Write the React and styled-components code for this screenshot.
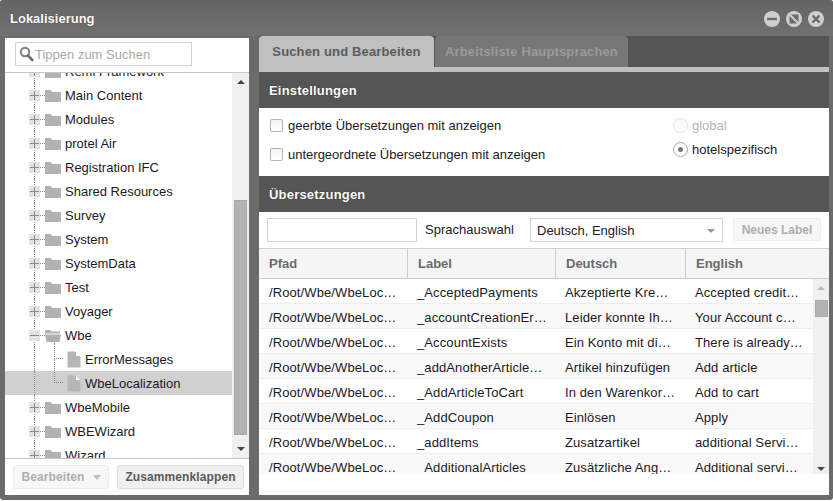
import React from "react";
import styled, { createGlobalStyle } from "styled-components";

const Global = createGlobalStyle`
  html, body { margin: 0; padding: 0; background: #fff; }
  * { box-sizing: border-box; }
  body { font-family: "Liberation Sans", Arial, sans-serif; font-size: 13px; color: #1a1a26; }
`;

const Win = styled.div`
  width: 833px; height: 500px; background: #6b6b6b; display: flex; flex-direction: column;
  border-radius: 3px; overflow: hidden;
`;
const TitleBar = styled.div`
  height: 36px; flex: none; display: flex; align-items: center; padding: 0 9px 0 10px;
  background: linear-gradient(#646464, #717171);
`;
const Title = styled.div`flex: 1; font-weight: bold; font-size: 13px; color: #fff; text-shadow: 0 0 1px #333;`;
const WinBtns = styled.div`display: flex; gap: 6px; margin-top: 1px;`;
const Body = styled.div`flex: 1; display: flex; padding: 0 4px 5px 5px; gap: 10px; min-height: 0;`;

const Left = styled.div`
  width: 244px; margin-top: 2px; background: #fff; display: flex; flex-direction: column;
`;
const SearchRow = styled.div`
  height: 35px; flex: none; padding: 4px 10px; border-bottom: 1px solid #c6c6c6;
`;
const SearchBox = styled.div`
  width: 177px; height: 24px; border: 1px solid #d2d2d2; display: flex; align-items: center; gap: 1px; padding-left: 3px;
  color: #aaa; font-size: 13px;
`;
const TreeWrap = styled.div`flex: 1; display: flex; min-height: 0; overflow: hidden;`;
const Tree = styled.div`flex: 1; overflow: hidden;`;
const TreeInner = styled.div`margin-top: -14px;`;
const Row = styled.div`
  position: relative; height: 24px; display: flex; align-items: center;
  padding-left: ${p => (p.$leaf ? 62 : 24)}px;
  background: ${p => (p.$sel ? "#d0d0d0" : "transparent")};
  white-space: nowrap;
  &::before {
    content: ""; position: absolute; left: 29px; top: 0; bottom: 0;
    border-left: 1px dotted #8a8a8a;
  }
`;
const LeafLine = styled.div`
  position: absolute; left: 49px; top: ${p => (p.$first ? -4 : -12)}px; width: 9px;
  height: ${p => (p.$first ? 16 : 24)}px;
  border-left: 1px dotted #8a8a8a; border-bottom: 1px dotted #8a8a8a;
`;
const Expander = styled.span`
  width: 11px; height: 11px; flex: none; background: #e1e4e7; position: relative; z-index: 1;
  &::before { content: ""; position: absolute; left: 1px; right: 1px; top: 5px; height: 1px; background: #8a8a8a; }
  &::after {
    content: ""; position: absolute; top: 1px; bottom: 1px; left: 5px; width: 1px;
    background: ${p => (p.$open ? "transparent" : "#8a8a8a")};
  }
`;
const Connector = styled.span`width: 5px; flex: none; margin-top: 1px; border-bottom: 1px dotted #8a8a8a;`;
const Label = styled.span`margin-left: 4px;`;
const TreeScroll = styled.div`
  width: 17px; flex: none; background: #f0f0f0; display: flex; flex-direction: column; align-items: center;
`;
const ArrowUp = styled.div`
  width: 0; height: 0; flex: none; border: 4px solid transparent; border-top: 0; border-bottom: 4px solid #444; margin: 7px 0 0;
`;
const ArrowDown = styled.div`
  width: 0; height: 0; flex: none; border: 4px solid transparent; border-bottom: 0; border-top: 4px solid #444;
`;
const Spacer = styled.div`height: ${p => p.$h}px; flex: none;`;
const Thumb = styled.div`
  width: 13px; flex: none; height: ${p => p.$h}px; background: #b3b3b3; border: 1px solid #aaa;
`;
const TreeFoot = styled.div`
  height: 37px; flex: none; border-top: 1px solid #c6c6c6; display: flex; gap: 8px; padding: 6px 5px 0 8px;
`;
const Btn = styled.div`
  height: 24px; width: ${p => p.$w}px; flex: none; display: flex; align-items: center; justify-content: center; gap: 8px;
  border: 1px solid ${p => (p.$off ? "#ececec" : "#dcdcdc")}; border-radius: 3px;
  background: ${p => (p.$off ? "#f7f7f7" : "#f0f0f0")};
  color: ${p => (p.$off ? "#aeaeae" : "#5a5a5a")}; font-weight: bold; font-size: 12px; letter-spacing: 0.1px;
`;
const Caret = styled.span`
  width: 0; height: 0; border: 4px solid transparent; border-bottom: 0; border-top: 5px solid #c0c0c0; margin-top: 1px;
`;

const Right = styled.div`flex: 1; background: #fff; display: flex; flex-direction: column; min-width: 0;`;
const TabStrip = styled.div`
  height: 36px; flex: none; background: #555; display: flex; gap: 1px; align-items: flex-start;
  border-bottom: 5px solid #c0c0c0;
`;
const Tab = styled.div`
  height: 31px; width: ${p => p.$w}px; flex: none; display: flex; align-items: center; justify-content: center;
  border-radius: 4px 4px 0 0; font-weight: bold; font-size: 13px; letter-spacing: 0.15px;
  background: ${p => (p.$on ? "#c0c0c0" : "#777")};
  color: ${p => (p.$on ? "#5c5c5c" : "#9a9a9a")};
`;
const Head = styled.div`
  height: 36px; flex: none; background: #555; color: #fff; font-weight: bold; font-size: 13px; letter-spacing: 0.2px;
  display: flex; align-items: center; padding-left: 10px; text-shadow: 0 0 1px #222;
`;
const Settings = styled.div`
  height: 68px; flex: none; display: flex; justify-content: space-between; padding: 0 0 0 11px;
`;
const Col = styled.div`display: flex; flex-direction: column; width: ${p => p.$w || "auto"}; padding-top: ${p => p.$pt}px;`;
const Opt = styled.div`
  height: ${p => p.$h}px; flex: none; display: flex; align-items: center; gap: ${p => p.$g}px;
  color: ${p => (p.$off ? "#b4b4b4" : "inherit")}; white-space: nowrap;
`;
const Check = styled.span`
  width: 13px; height: 13px; flex: none; border: 1px solid #b5b5b5; border-radius: 2px; background: linear-gradient(#f4f4f4, #fff);
`;
const Radio = styled.span`
  width: 15px; height: 15px; flex: none; border-radius: 50%; border: 1px solid ${p => (p.$off ? "#e4e4e4" : "#a8a8a8")};
  background: ${p => (p.$off ? "#fbfbfb" : "#fff")}; display: flex; align-items: center; justify-content: center;
  &::after { content: ""; width: 5px; height: 5px; border-radius: 50%; background: ${p => (p.$on ? "#777" : "transparent")}; }
`;
const Toolbar = styled.div`
  height: 36px; flex: none; display: flex; align-items: center; padding: 0 8px;
`;
const TextInput = styled.div`width: 150px; height: 24px; border: 1px solid #d2d2d2; flex: none;`;
const ToolLabel = styled.span`width: 113px; padding-left: 8px; flex: none; margin-top: -1px;`;
const Select = styled.div`
  width: 193px; height: 24px; flex: none; border: 1px solid #d2d2d2; display: flex; align-items: center; justify-content: space-between;
  padding: 1px 7px 0 6px;
`;
const SelCaret = styled.span`width: 0; height: 0; border: 4px solid transparent; border-bottom: 0; border-top: 4px solid #999;`;
const NewBtn = styled(Btn)`margin: -1px 0 0 10px; height: 23px; letter-spacing: 0;`;

const Grid = styled.div`
  display: grid; grid-template-columns: 148px 148px 130px 1fr;
`;
const HeadRow = styled(Grid)`
  height: 31px; flex: none; background: #f5f5f5; border-top: 1px solid #ccc; border-bottom: 1px solid #ccc;
`;
const HeadCell = styled.div`
  display: flex; align-items: center; padding-left: 10px; font-weight: bold; color: #6a6a6a; font-size: 13px;
  & + & { border-left: 1px solid #ccc; }
`;
const TableBody = styled.div`height: 195px; flex: none; display: flex; overflow: hidden;`;
const Rows = styled.div`flex: 1; min-width: 0; overflow: hidden;`;
const DataRow = styled(Grid)`
  height: 25px; border-bottom: 1px solid #eee;
  background: ${p => (p.$alt ? "#f9f9f9" : "#fff")};
`;
const Cell = styled.div`
  padding: 2px 10px 0; display: flex; align-items: center; white-space: nowrap; letter-spacing: 0.1px;
`;
const TableScroll = styled.div`
  width: 16px; flex: none; background: #f0f0f0; display: flex; flex-direction: column; align-items: center;
`;
const UpDim = styled(ArrowUp)`border-bottom-color: #bbb;`;

const SearchIcon = () => (
  <svg width="15" height="16" viewBox="0 0 15 16" style={{ flex: "none" }}>
    <circle cx="6" cy="6" r="4.2" fill="none" stroke="#7e7e7e" strokeWidth="2" />
    <path d="M9 9.5 L13.2 14" stroke="#707070" strokeWidth="2.6" strokeLinecap="round" />
  </svg>
);
const Folder = ({ open }) => (
  <svg width="16" height="14" viewBox="0 0 16 14" style={{ flex: "none", marginTop: 1 }}>
    {open ? (
      <path d="M0 1 H5 L6.5 2.5 H15 V4.5 H0 Z M0 5.5 H16 L14.5 13 H1.5 Z" fill="#b0b0b0" />
    ) : (
      <path d="M0 1 H5.5 L7.5 3 H16 V13 H0 Z" fill="#b2b2b2" />
    )}
  </svg>
);
const Doc = () => (
  <svg width="14" height="17" viewBox="0 0 14 17" style={{ flex: "none" }}>
    <path d="M0.5 0.5 H8 L13.5 6 V16.5 H0.5 Z" fill="#b6b6b6" />
    <path d="M9 0.8 L13.2 5 H9 Z" fill="#fff" />
  </svg>
);
const WinIcon = ({ kind }) => (
  <svg width="16" height="16" viewBox="0 0 16 16">
    <circle cx="8" cy="8" r="8" fill="#cfcfcf" />
    {kind === "min" && <rect x="3" y="6.8" width="10" height="2.4" fill="#6b6b6b" />}
    {kind === "max" && (
      <>
        <rect x="3.5" y="3.5" width="9" height="9" fill="#6b6b6b" />
        <path d="M3 3 L13 13" stroke="#cfcfcf" strokeWidth="2" />
      </>
    )}
    {kind === "close" && <path d="M4.5 4.5 L11.5 11.5 M11.5 4.5 L4.5 11.5" stroke="#6b6b6b" strokeWidth="2.4" />}
  </svg>
);

const tree = [
  ["Remi Framework"], ["Main Content"], ["Modules"], ["protel Air"], ["Registration IFC"], ["Shared Resources"],
  ["Survey"], ["System"], ["SystemData"], ["Test"], ["Voyager"], ["Wbe", "open"],
  ["ErrorMessages", "leaf"], ["WbeLocalization", "sel"], ["WbeMobile"], ["WBEWizard"], ["Wizard"],
];
const rows = [
  ["_AcceptedPayments", "Akzeptierte Kre…", "Accepted credit…"],
  ["_accountCreationEr…", "Leider konnte Ih…", "Your Account c…"],
  ["_AccountExists", "Ein Konto mit di…", "There is already…"],
  ["_addAnotherArticle…", "Artikel hinzufügen", "Add article"],
  ["_AddArticleToCart", "In den Warenkor…", "Add to cart"],
  ["_AddCoupon", "Einlösen", "Apply"],
  ["_addItems", "Zusatzartikel", "additional Servi…"],
  ["_AdditionalArticles", "Zusätzliche Ang…", "Additional servi…"],
];

export default function App() {
  return (
    <>
      <Global />
      <Win>
        <TitleBar>
          <Title>Lokalisierung</Title>
          <WinBtns>
            <WinIcon kind="min" />
            <WinIcon kind="max" />
            <WinIcon kind="close" />
          </WinBtns>
        </TitleBar>
        <Body>
          <Left>
            <SearchRow>
              <SearchBox><SearchIcon />Tippen zum Suchen</SearchBox>
            </SearchRow>
            <TreeWrap>
              <Tree>
                <TreeInner>
                  {tree.map(([name, kind]) => {
                    const leaf = kind === "leaf" || kind === "sel";
                    return (
                      <Row key={name} $leaf={leaf} $sel={kind === "sel"}>
                        {leaf ? (
                          <>
                            <LeafLine $first={kind === "leaf"} />
                            <Doc />
                          </>
                        ) : (
                          <>
                            <Expander $open={kind === "open"} />
                            <Connector />
                            <Folder open={kind === "open"} />
                          </>
                        )}
                        <Label>{name}</Label>
                      </Row>
                    );
                  })}
                </TreeInner>
              </Tree>
              <TreeScroll>
                <ArrowUp />
                <Spacer $h={116} />
                <Thumb $h={235} />
                <Spacer $h={12} />
                <ArrowDown />
              </TreeScroll>
            </TreeWrap>
            <TreeFoot>
              <Btn $w={96} $off>Bearbeiten <Caret /></Btn>
              <Btn $w={127}>Zusammenklappen</Btn>
            </TreeFoot>
          </Left>
          <Right>
            <TabStrip>
              <Tab $on $w={175}>Suchen und Bearbeiten</Tab>
              <Tab $w={193}>Arbeitsliste Hauptsprachen</Tab>
            </TabStrip>
            <Head>Einstellungen</Head>
            <Settings>
              <Col $pt={3}>
                <Opt $h={29} $g={5}><Check />geerbte Übersetzungen mit anzeigen</Opt>
                <Opt $h={29} $g={5}><Check />untergeordnete Übersetzungen mit anzeigen</Opt>
              </Col>
              <Col $w="156px" $pt={5}>
                <Opt $h={24} $g={4} $off><Radio $off />global</Opt>
                <Opt $h={24} $g={4}><Radio $on />hotelspezifisch</Opt>
              </Col>
            </Settings>
            <Head>Übersetzungen</Head>
            <Toolbar>
              <TextInput />
              <ToolLabel>Sprachauswahl</ToolLabel>
              <Select>Deutsch, English<SelCaret /></Select>
              <NewBtn $w={88} $off>Neues Label</NewBtn>
            </Toolbar>
            <HeadRow>
              <HeadCell>Pfad</HeadCell>
              <HeadCell>Label</HeadCell>
              <HeadCell>Deutsch</HeadCell>
              <HeadCell>English</HeadCell>
            </HeadRow>
            <TableBody>
              <Rows>
                {rows.map((r, i) => (
                  <DataRow key={r[0]} $alt={i % 2 === 1}>
                    <Cell>/Root/Wbe/WbeLoc…</Cell>
                    {r.map(t => <Cell key={t}>{t}</Cell>)}
                  </DataRow>
                ))}
              </Rows>
              <TableScroll>
                <UpDim />
                <Spacer $h={10} />
                <Thumb $h={17} />
                <Spacer $h={150} />
                <ArrowDown />
              </TableScroll>
            </TableBody>
          </Right>
        </Body>
      </Win>
    </>
  );
}
